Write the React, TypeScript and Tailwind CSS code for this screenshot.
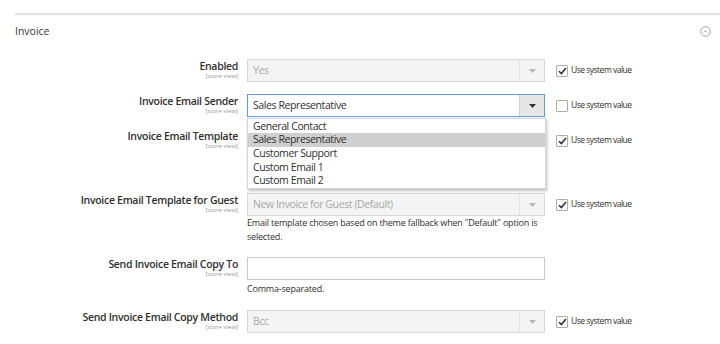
import React from 'react';

const font = { fontFamily: '"Open Sans", "Noto Sans", sans-serif' };

function Label({ text }: { text: string }) {
  return (
    <div className="w-[223px] shrink-0 text-right pt-[1px]">
      <div className="text-[10.5px] leading-[13px] font-semibold text-[#303030] tracking-[-0.3px]">{text}</div>
      <div className="text-[6px] leading-[7px] text-[#999]">[store view]</div>
    </div>
  );
}

function Arrow({ dark }: { dark?: boolean }) {
  return (
    <svg width="7" height="4" viewBox="0 0 7 4" className="block">
      <path d="M0 0 L7 0 L3.5 4 Z" fill={dark ? '#333' : '#b5b5b5'} />
    </svg>
  );
}

function Select({ value, disabled, focused }: { value: string; disabled?: boolean; focused?: boolean }) {
  return (
    <div
      className={`h-[23px] w-[298px] flex border ${
        focused ? 'border-[#5d9ddb] bg-white' : 'border-[#d8d8d8] bg-[#f4f4f4]'
      }`}
    >
      <div
        className={`flex-1 flex items-center pl-[5px] text-[10.5px] tracking-[-0.4px] ${
          disabled ? 'text-[#a8a8a8]' : 'text-[#303030]'
        }`}
      >
        {value}
      </div>
      <div
        className={`w-[25px] flex items-center justify-center border-l ${
          focused ? 'bg-[#e6e6e6] border-[#d0d0d0]' : 'border-[#e3e3e3]'
        }`}
      >
        <Arrow dark={focused} />
      </div>
    </div>
  );
}

function SystemValue({ checked }: { checked?: boolean }) {
  return (
    <div className="ml-[11px] h-[23px] flex items-center gap-[3px] shrink-0">
      <div className="w-[12px] h-[12px] border border-[#adadad] rounded-[1px] bg-white flex items-center justify-center">
        {checked && (
          <svg width="9" height="8" viewBox="0 0 9 8">
            <path d="M1 4.2 L3.4 6.6 L8 1" fill="none" stroke="#333" strokeWidth="1.6" />
          </svg>
        )}
      </div>
      <span className="text-[8.5px] text-[#303030] tracking-[-0.5px]">Use system value</span>
    </div>
  );
}

function Note({ children }: { children: React.ReactNode }) {
  return <div className="text-[9px] leading-[14px] text-[#303030] w-[298px] tracking-[-0.2px]">{children}</div>;
}

const options = ['General Contact', 'Sales Representative', 'Customer Support', 'Custom Email 1', 'Custom Email 2'];

export default function App() {
  return (
    <div className="w-[720px] h-[344px] bg-white overflow-hidden" style={font}>
      <div className="pt-[13px] pl-[15px]">
        <div className="h-[2px] bg-[#e3e3e3]" />
        <div className="flex items-center justify-between h-[32px] pt-[1px] pr-[9px]">
          <span className="text-[10.5px] text-[#41362f]">Invoice</span>
          <svg width="11" height="11" viewBox="0 0 11 11">
            <circle cx="5.5" cy="5.5" r="4.8" fill="none" stroke="#9a9a9a" strokeWidth="0.9" />
            <path d="M3.4 6.6 L5.5 4.5 L7.6 6.6" fill="none" stroke="#9a9a9a" strokeWidth="0.9" />
          </svg>
        </div>
      </div>

      <div className="pl-[15px] mt-[12px] flex flex-col">
        <div className="flex">
          <Label text="Enabled" />
          <div className="ml-[9px]">
            <Select value="Yes" disabled />
          </div>
          <SystemValue checked />
        </div>

        <div className="flex mt-[12px]">
          <Label text="Invoice Email Sender" />
          <div className="ml-[9px] relative">
            <Select value="Sales Representative" focused />
            <div className="absolute left-0 top-[24px] w-[299px] z-10 bg-white border border-[#d6d6d6] shadow-[1px_2px_3px_rgba(0,0,0,0.25)] pt-[0.5px]">
              {options.map((o) => (
                <div
                  key={o}
                  className={`h-[13.7px] leading-[13.7px] pl-[5px] text-[10.5px] tracking-[-0.4px] text-[#303030] ${
                    o === 'Sales Representative' ? 'bg-[#cfcfcf]' : ''
                  }`}
                >
                  {o}
                </div>
              ))}
            </div>
          </div>
          <SystemValue />
        </div>

        <div className="flex mt-[12px]">
          <Label text="Invoice Email Template" />
          <div className="ml-[9px]">
            <Select value="" disabled />
            <div className="h-[29px]" />
          </div>
          <SystemValue checked />
        </div>

        <div className="flex mt-[12px]">
          <Label text="Invoice Email Template for Guest" />
          <div className="ml-[9px]">
            <Select value="New Invoice for Guest (Default)" disabled />
            <Note>
              Email template chosen based on theme fallback when "Default" option is selected.
            </Note>
          </div>
          <SystemValue checked />
        </div>

        <div className="flex mt-[13px]">
          <Label text="Send Invoice Email Copy To" />
          <div className="ml-[9px]">
            <div className="h-[23px] w-[298px] border border-[#c8c8c8] bg-white" />
            <div className="mt-[2px]">
              <Note>Comma-separated.</Note>
            </div>
          </div>
        </div>

        <div className="flex mt-[14px]">
          <Label text="Send Invoice Email Copy Method" />
          <div className="ml-[9px]">
            <Select value="Bcc" disabled />
          </div>
          <SystemValue checked />
        </div>
      </div>
    </div>
  );
}
